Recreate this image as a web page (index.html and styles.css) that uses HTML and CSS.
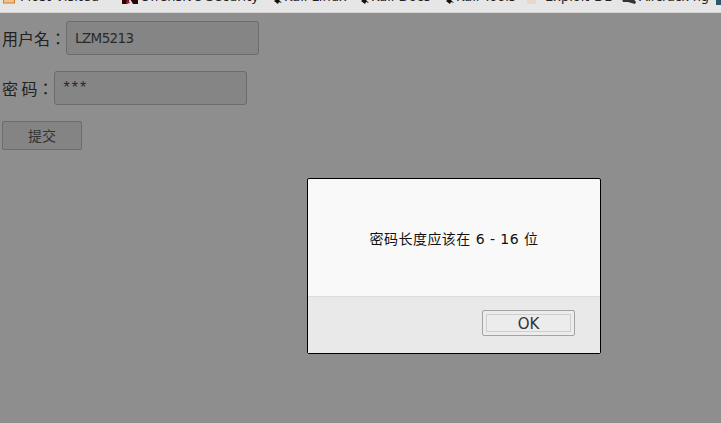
FILE: index.html
```html
<!DOCTYPE html>
<html lang="zh">
<head>
<meta charset="utf-8">
<title>登录</title>
<link rel="stylesheet" href="styles.css">
</head>
<body>
<nav class="bookmarks">
  <a class="mark m1"><svg class="ico" viewBox="0 0 16 14"><rect x="1.5" y="2" width="11" height="11" fill="#edc58e" stroke="#cf7a30"/></svg><span class="name">Most Visited</span></a>
  <a class="mark m2"><svg class="ico" viewBox="0 0 16 14"><path d="M0 0H16V14H11L8 9 5 14H0Z" fill="#2a0508"/><path d="M5 8 8 13 4 14Z" fill="#a01828"/></svg><span class="name">Offensive Security</span></a>
  <a class="mark m3"><svg class="ico small" viewBox="0 0 10 14"><path d="M5 8 1 11 5 14 6 12 9 13 6 10Z" fill="#111"/></svg><span class="name">Kali Linux</span></a>
  <a class="mark m4"><svg class="ico small" viewBox="0 0 10 14"><path d="M5 8 1 11 5 14 6 12 9 13 6 10Z" fill="#111"/></svg><span class="name">Kali Docs</span></a>
  <a class="mark m5"><svg class="ico small" viewBox="0 0 10 14"><path d="M5 8 1 11 5 14 6 12 9 13 6 10Z" fill="#111"/></svg><span class="name">Kali Tools</span></a>
  <a class="mark m6"><svg class="ico" viewBox="0 0 16 14"><rect x="0" y="4" width="9" height="10" fill="#e8d8cc"/></svg><span class="name">Exploit-DB</span></a>
  <a class="mark m7"><svg class="ico" viewBox="0 0 16 14"><path d="M0 6H10L15 12 14 14 7 12 2 12Z" fill="#333"/></svg><span class="name">Aircrack-ng</span></a>
  <span class="edge"></span>
</nav>
<main class="page">
  <form class="login">
    <div class="row"><label class="lbl" lang="zh-Hant">用户名：</label><input class="field" type="text" value="LZM5213"></div>
    <div class="row"><label class="lbl" lang="zh-Hant">密 码：</label><div class="field pw">***</div></div>
    <button class="submit" type="button">提交</button>
  </form>
</main>
<div class="modal">
  <div class="msg">密码长度应该在 6 - 16 位</div>
  <div class="foot"><button class="ok" type="button"><span class="ok-in">OK</span></button></div>
</div>
</body>
</html>
```
FILE: styles.css
```css
* { box-sizing: border-box; }
html, body { margin: 0; height: 423px; overflow: hidden; }
body {
  background: #8e8e8e;
  font-family: "Liberation Sans", "Noto Sans CJK SC", sans-serif;
  display: flex;
  flex-direction: column;
}
.bookmarks {
  flex: none;
  height: 13px;
  background: #e6e6e6;
  border-bottom: 1px solid #d2d2d2;
  display: flex;
  align-items: flex-end;
  overflow: hidden;
  font: 13px/17px "DejaVu Sans", sans-serif;
  color: #222;
  white-space: nowrap;
}
.mark { display: flex; align-items: flex-end; height: 24px; flex: none; }
.ico { width: 16px; height: 14px; flex: none; margin: 0 2px 8px 0; }
.ico.small { width: 10px; margin-right: 1px; }
.name { margin-bottom: 7px; }
.m1 { margin-left: 2px; width: 120px; }
.m2 { width: 151px; }
.m3 { width: 87px; }
.m4 { width: 85px; }
.m5 { width: 82px; }
.m6 { width: 94px; }
.m7 { width: 95px; }
.m7 .name { letter-spacing: -.4px; }
.edge { width: 5px; height: 5px; background: #2b5a66; margin-bottom: 7px; }
.page { flex: 1; padding: 8px 0 0 2px; }
.login { display: flex; flex-direction: column; align-items: flex-start; color: #222; }
.row { display: flex; align-items: center; height: 34px; margin-bottom: 16px; }
.lbl { font: 16px/24px "Noto Sans CJK TC", sans-serif; padding-bottom: 1px; }
.field {
  width: 193px;
  height: 34px;
  padding: 0 8px;
  background: #858585;
  border: 1px solid #6c6c6c;
  border-radius: 3px;
  font: 13.5px "DejaVu Sans", sans-serif;
  color: #2a2a2a;
  letter-spacing: -.6px;
  outline: 0;
}
.pw { padding-left: 9px; font: 16px/32px "Liberation Sans", sans-serif; letter-spacing: 2px; }
.submit {
  width: 80px;
  height: 29px;
  padding: 0 0 2px;
  background: #848484;
  border: 1px solid #6c6c6c;
  border-radius: 2px;
  font: 14px "Noto Sans CJK SC", sans-serif;
  color: #333;
}
.modal {
  position: absolute;
  left: 307px;
  top: 178px;
  width: 294px;
  height: 176px;
  display: flex;
  flex-direction: column;
  background: #f9f9f9;
  border: 1px solid #000;
  border-radius: 2px;
}
.msg {
  flex: 1;
  display: flex;
  align-items: center;
  justify-content: center;
  padding: 1px 0 0;
  font: 14px "DejaVu Sans", "Noto Sans CJK SC", sans-serif;
  letter-spacing: .45px;
  color: #111;
}
.foot {
  height: 57px;
  flex: none;
  background: #e9e9e9;
  border-top: 1px solid #dcdcdc;
  display: flex;
  justify-content: flex-end;
  align-items: flex-start;
  padding: 13px 25px 0 0;
}
.ok {
  width: 93px;
  height: 26px;
  padding: 3px;
  background: #ececec;
  border: 1px solid #a3a3a3;
  border-radius: 2px;
}
.ok-in {
  display: block;
  height: 100%;
  border: 1px solid #cfcfcf;
  font: 15px/19px "DejaVu Sans", sans-serif;
  color: #333;
}
```
